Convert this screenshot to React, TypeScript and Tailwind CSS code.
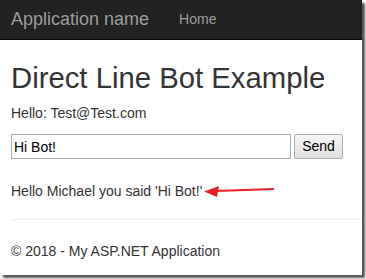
export default function App() {
  return (
    <div className="w-[366px] h-[279px] bg-white font-['Liberation_Sans',Arial,sans-serif] text-[#333]">
      <div className="w-[362px] h-[275px] bg-white shadow-[3px_3px_2px_#555] overflow-hidden">
        <nav className="h-[40px] bg-[#222] border-b border-[#080808] flex items-center">
          <span className="ml-[11px] text-[18px] text-[#9d9d9d]">Application name</span>
          <span className="ml-[30px] text-[14px] text-[#9d9d9d]">Home</span>
        </nav>
        <div className="px-[11px]">
          <h1 className="mt-[20px] text-[29.3px] leading-[36px] whitespace-nowrap">Direct Line Bot Example</h1>
          <p className="mt-[7px] text-[14px] leading-[20px]">Hello: Test@Test.com</p>
          <div className="mt-[11px] flex gap-[3px]">
            <input
              className="w-[280px] h-[25px] border border-[#a9a9a9] px-[2px] text-[14px] text-black outline-none"
              defaultValue="Hi Bot!"
            />
            <button className="w-[49px] h-[25px] border border-[#adadad] rounded-[2px] bg-gradient-to-b from-[#f5f5f5] to-[#e0e0e0] text-[14px] text-black">
              Send
            </button>
          </div>
          <div className="mt-[22px] flex items-center">
            <span className="text-[14px] leading-[20px]">Hello Michael you said 'Hi Bot!'</span>
            <svg width="72" height="14" viewBox="0 0 72 14" className="ml-[2px]">
              <line x1="12" y1="7" x2="70" y2="5" stroke="#e8212a" strokeWidth="2" />
              <polygon points="0,7.5 15,2 13,13" fill="#e8212a" />
            </svg>
          </div>
          <hr className="mt-[18px] border-[#eee] -mr-[11px]" />
          <p className="mt-[21px] text-[14px] leading-[20px]">© 2018 - My ASP.NET Application</p>
        </div>
      </div>
    </div>
  );
}
